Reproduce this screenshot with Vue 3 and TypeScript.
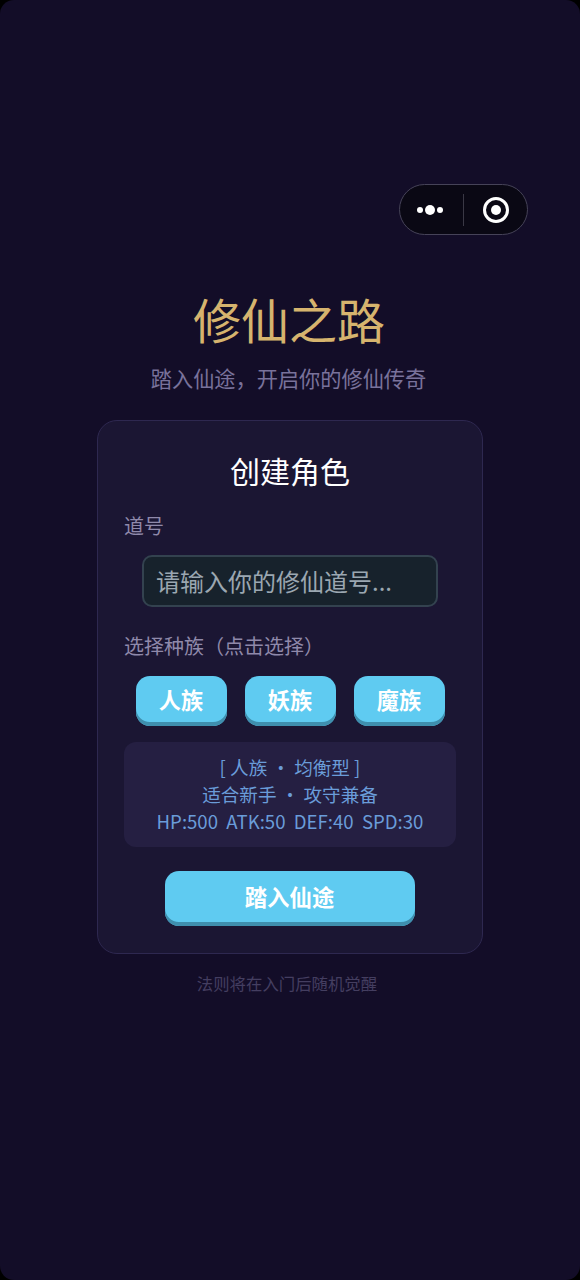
<script setup lang="ts">
const races: string[] = ['人族', '妖族', '魔族']
</script>

<template>
  <div class="page">
    <div class="capsule">
      <div class="dots"><i class="dot"></i><i class="dot big"></i><i class="dot"></i></div>
      <div class="divider"></div>
      <div class="target"><i class="core"></i></div>
    </div>

    <h1 class="title">修仙之路</h1>
    <p class="subtitle">踏入仙途，开启你的修仙传奇</p>

    <section class="card">
      <h2 class="card-title">创建角色</h2>
      <div class="label">道号</div>
      <div class="input-wrap">
        <input class="input" type="text" placeholder="请输入你的修仙道号..." />
      </div>
      <div class="label race-label">选择种族（点击选择）</div>
      <div class="races">
        <button v-for="r in races" :key="r" class="race">{{ r }}</button>
      </div>
      <div class="info">
        <div>[ 人族 · 均衡型 ]</div>
        <div>适合新手 · 攻守兼备</div>
        <div>HP:500&nbsp; ATK:50&nbsp; DEF:40&nbsp; SPD:30</div>
      </div>
      <button class="enter">踏入仙途</button>
    </section>

    <p class="foot">法则将在入门后随机觉醒</p>
  </div>
</template>

<style>
html, body { margin: 0; background: #000; }
</style>

<style scoped>
.page {
  position: relative;
  box-sizing: border-box;
  width: 580px;
  height: 1280px;
  padding-top: 284px;
  display: flex;
  flex-direction: column;
  align-items: center;
  border-radius: 14px;
  background: #130d28;
  font-family: "Noto Sans CJK SC", "Noto Sans", sans-serif;
  overflow: hidden;
}
.capsule {
  position: absolute;
  left: 399px;
  top: 184px;
  box-sizing: border-box;
  width: 129px;
  height: 51px;
  border-radius: 26px;
  border: 1px solid #464358;
  background: #0a0814;
  display: flex;
  align-items: center;
}
.dots { width: 63px; padding-right: 4px; display: flex; align-items: center; justify-content: center; gap: 2px; box-sizing: border-box; }
.dot { width: 6px; height: 6px; border-radius: 50%; background: #fff; display: block; }
.dot.big { width: 10px; height: 10px; }
.divider { width: 1px; height: 32px; background: #3a3845; }
.target {
  margin-left: 19px;
  box-sizing: border-box;
  width: 26px;
  height: 26px;
  border-radius: 50%;
  border: 3px solid #fff;
  display: flex;
  align-items: center;
  justify-content: center;
}
.core { width: 10px; height: 10px; border-radius: 50%; background: #fff; display: block; }
.title {
  margin: 0 0 0 -2px;
  font-size: 48px;
  line-height: 68px;
  font-weight: 400;
  color: #d6b46e;
}
.subtitle {
  margin: 10px 3px 0 0;
  font-size: 21.2px;
  line-height: 32px;
  color: #79729b;
}
.card {
  margin-top: 26px;
  box-sizing: border-box;
  width: 386px;
  height: 534px;
  padding: 25px 26px 0;
  border: 1px solid #2e2850;
  border-radius: 20px;
  background: #1b1633;
  display: flex;
  flex-direction: column;
}
.card-title {
  margin: 0;
  text-align: center;
  font-size: 30px;
  line-height: 48px;
  font-weight: 400;
  color: #fff;
}
.label {
  margin-top: 17px;
  font-size: 20px;
  line-height: 30px;
  color: #8f89aa;
}
.input-wrap { margin-top: 14px; display: flex; justify-content: center; }
.input {
  box-sizing: border-box;
  width: 296px;
  height: 52px;
  padding: 0 14px 2px 12px;
  border: 2px solid #33424f;
  border-radius: 10px;
  background: #17222c;
  font: inherit;
  font-size: 24px;
  color: #fff;
  outline: none;
}
.input::placeholder { color: #9ba7b1; opacity: 1; }
.race-label { margin-top: 24px; }
.races {
  margin-top: 15px;
  display: flex;
  justify-content: center;
  gap: 18px;
}
.race {
  width: 91px;
  height: 50px;
  padding: 0 0 4px;
  border: 0;
  border-radius: 14px;
  background: #5fcbf1;
  box-shadow: inset 0 -4px 0 #3f8fae;
  font: inherit;
  font-size: 22.2px;
  font-weight: 700;
  color: #fff;
}
.info {
  margin-top: 16px;
  box-sizing: border-box;
  height: 105px;
  padding-top: 11px;
  border-radius: 12px;
  background: #251f42;
  text-align: center;
  font-size: 18.6px;
  line-height: 27px;
  color: #6a9cd9;
}
.enter {
  margin: 24px auto 0;
  width: 250px;
  height: 55px;
  padding: 0 1px 6px 0;
  border: 0;
  border-radius: 14px;
  background: #5fcbf1;
  box-shadow: inset 0 -4px 0 #3f8fae;
  font: inherit;
  font-size: 22.4px;
  font-weight: 700;
  color: #fff;
}
.foot {
  margin: 17px 6px 0 0;
  font-size: 16.4px;
  line-height: 24px;
  color: #443e60;
}
</style>
